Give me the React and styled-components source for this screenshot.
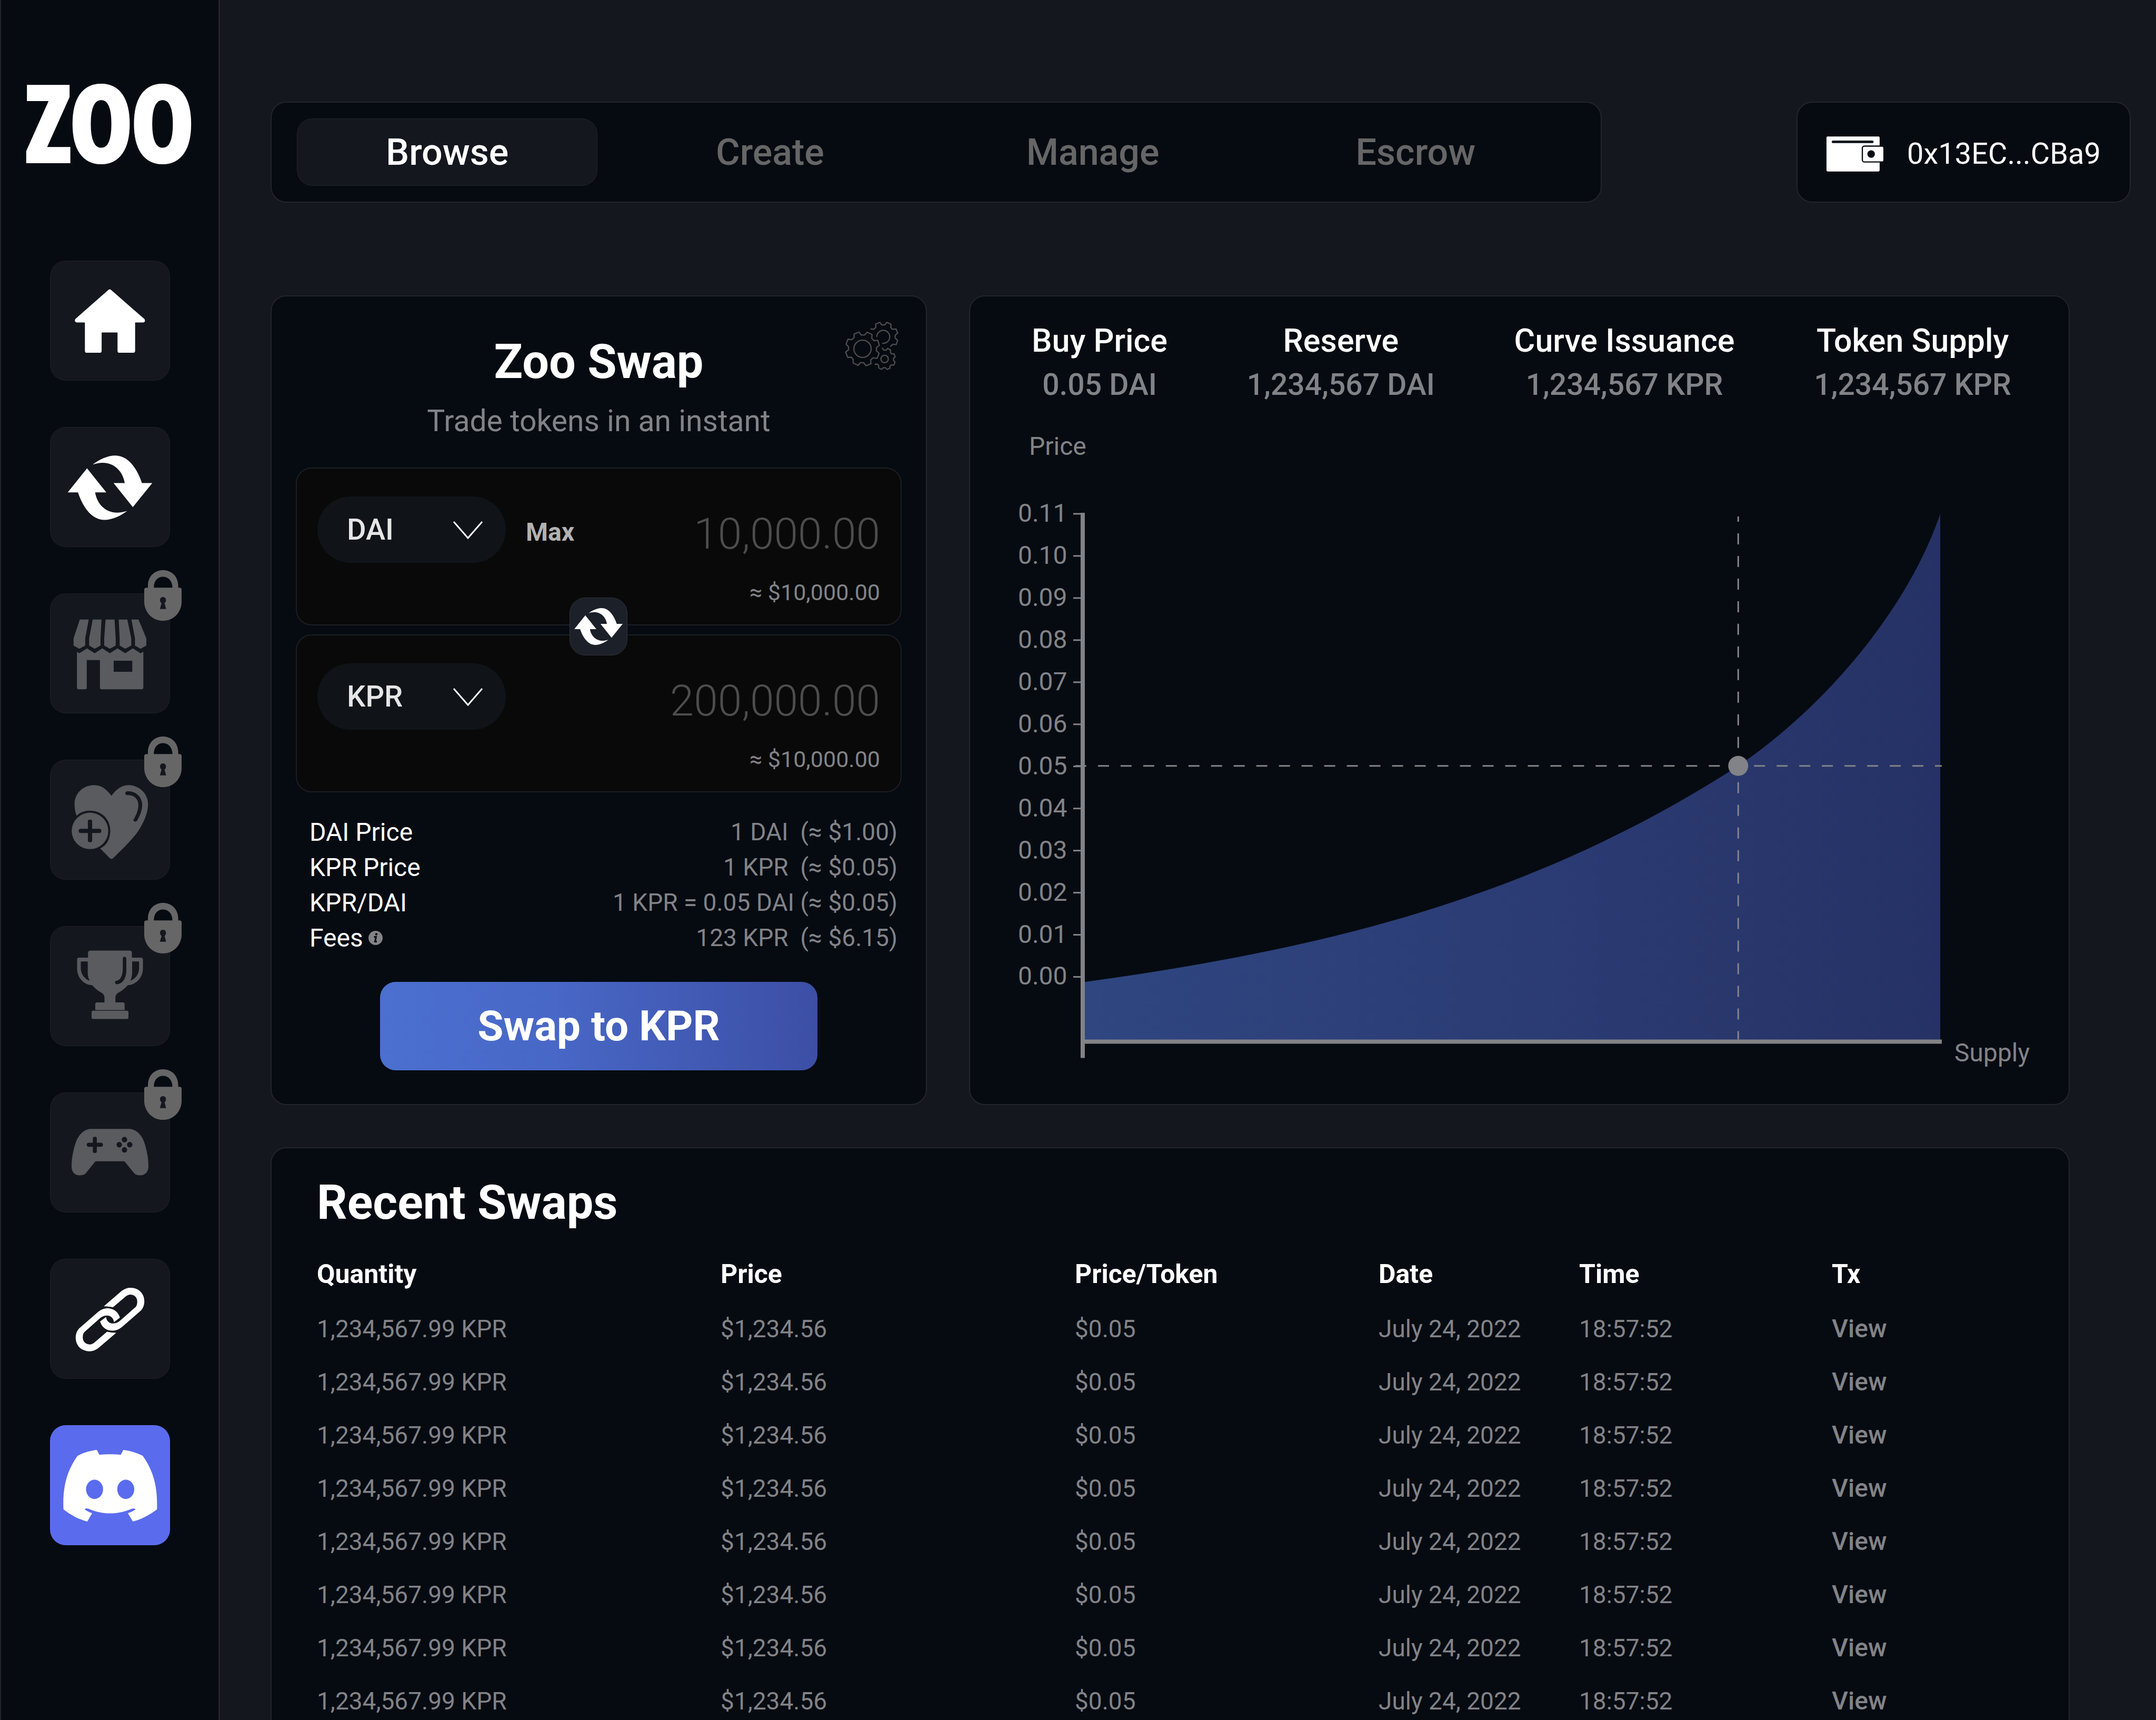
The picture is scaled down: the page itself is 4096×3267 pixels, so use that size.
import React from "react";
import styled, { createGlobalStyle } from "styled-components";

const c = {
  page: "#14171e",
  panel: "#060b12",
  well: "#090909",
  line: "#23252b",
  muted: "#828387",
  dim: "#666666",
  faint: "#4d4d4d",
  icon: "#595b5f",
  white: "#ffffff",
};

const GlobalStyle = createGlobalStyle`
  *, *::before, *::after { box-sizing: border-box; }
  body { margin: 0; background: ${c.page}; }
  body, button, input, select {
    font-family: Roboto, "Liberation Sans", sans-serif;
    color: ${c.white};
  }
`;

const Layout = styled.div`
  display: flex;
  height: 100vh;
  overflow: hidden;
  background: ${c.page};
`;

/* ---------- sidebar ---------- */

const Sidebar = styled.aside`
  flex: 0 0 418px;
  display: flex;
  flex-direction: column;
  align-items: center;
  background: ${c.panel};
  border: solid ${c.line};
  border-width: 0 3px 0 2px;
`;

const Logo = styled.a`
  flex-shrink: 0;
  height: 240px;
  margin: 110px 0 145px;
  font-family: "Noto Sans ExtraCondensed Black", "Noto Sans ExtraCondensed", "Noto Sans Condensed", "Open Sans Condensed", "Roboto Condensed", "Liberation Sans Narrow", sans-serif;
  font-size: 196px;
  font-weight: 900;
  line-height: 240px;
  color: ${c.white};
  -webkit-text-stroke: 8px ${c.white};
  text-decoration: none;
`;

const SideNav = styled.nav`
  display: flex;
  flex-direction: column;
  gap: 88px;
`;

const Tile = styled.a`
  position: relative;
  display: block;
  width: 228px;
  height: 228px;
  border-radius: 30px;
  background: ${(p) => p.$bg || c.page};
  color: ${(p) => (p.$locked ? c.icon : c.white)};
  box-shadow: inset 0 0 0 1px rgba(255, 255, 255, 0.04);
`;

const TileArt = styled.svg`
  display: block;
  width: 100%;
  height: 100%;
  fill: currentColor;
`;

const LockBadge = styled.svg`
  position: absolute;
  top: -44px;
  right: -22px;
  width: 71px;
  height: 96px;
  fill: ${c.dim};
`;

const art = {
  home: {
    box: "354 660 846 349",
    draw: (
      <path d="M763 746Q775 741 787 746L1020 830Q1030 838 1012 840H954V922Q954 928 940 928H844Q830 928 830 922V869H718V922Q718 928 704 928H614Q600 928 600 922V840H542Q524 838 532 830Z" />
    ),
  },
  swap: {
    box: "354 1145 846 349",
    draw: (
      <>
        <path d="M655 1254C700 1240 760 1228 815 1228C900 1228 965 1262 1002 1308H1075L938 1378L802 1308H881C868 1275 810 1249 725 1249C700 1249 680 1251 655 1254Z" />
        <path d="M898 1389C853 1403 793 1415 738 1415C653 1415 588 1381 551 1335H479L615 1265L751 1335H672C685 1368 743 1394 828 1394C853 1394 873 1392 898 1389Z" />
      </>
    ),
  },
  store: {
    box: "354 109 846 349",
    draw: (
      <>
        <path d="M564 185H627L602 240V261L561 270L520 261V240ZM655 185H717L710 240V261L669 270L630 261V240ZM746 185H809L817 240V261L776 270L736 261V240ZM838 185H899L927 240V261L884 270L845 261V240ZM928 185H978L1033 240V261L992 270L953 261V240Z" />
        <path
          fillRule="evenodd"
          d="M544 279L561 283L615 269L669 283L723 269L776 283L830 269L884 283L938 269L992 283L1012 279V383Q1012 388 1000 388H718Q706 388 706 383V303H613V383Q613 388 601 388H556Q544 388 544 383ZM803 305V337H934V305Z"
        />
      </>
    ),
  },
  heart: {
    box: "354 593 846 349",
    draw: (
      <>
        <path
          fillRule="evenodd"
          d="M787 698C815 682 855 667 906 667C985 667 1045 692 1045 722C1045 750 1010 780 970 804C920 832 850 858 800 879Q787 884 774 879L708 851C755 843 779 822 779 799C779 765 715 741 636 741C600 741 565 746 542 756C532 747 527 735 527 722C527 690 590 667 665 667C718 667 755 680 787 698ZM898 685C950 682 1004 700 1004 724C1004 742 985 758 968 770C960 775 940 773 942 768C960 755 977 742 977 724C977 708 945 694 898 696C880 695 880 686 898 685Z"
        />
        <ellipse cx="636" cy="800" rx="129" ry="53" />
        <rect x="621" y="767" width="30" height="66" rx="15" ry="5" fill={c.page} />
        <rect x="556" y="794" width="160" height="12" rx="14" ry="6" fill={c.page} />
      </>
    ),
  },
  trophy: {
    box: "354 1076 846 349",
    draw: (
      <>
        <path
          fillRule="evenodd"
          d="M622 1152Q624 1148 636 1147H917Q930 1148 931 1152V1168H997Q1008 1168 1009 1174V1200C1009 1226 960 1247 902 1248C880 1258 855 1266 835 1270C820 1274 815 1278 815 1286V1298H868Q879 1298 880 1303V1320H673V1303Q674 1298 685 1298H738V1286C738 1278 733 1274 718 1270C698 1266 673 1258 651 1248C593 1247 545 1226 545 1200V1174Q546 1168 557 1168H622ZM571 1179H620V1215Q621 1226 633 1235C595 1230 572 1214 571 1200ZM982 1179H933V1215Q932 1226 920 1235C958 1230 981 1214 982 1200ZM867 1170Q870 1165 880 1165Q892 1166 892 1171V1205C892 1230 860 1245 825 1245Q812 1244 812 1239Q814 1235 825 1235C850 1233 867 1220 867 1200Z"
        />
        <rect x="647" y="1322" width="260" height="24" rx="11" ry="4" />
      </>
    ),
  },
  game: {
    box: "354 90 846 349",
    draw: (
      <>
        <path d="M640 196H915C960 197 1005 213 1025 243C1040 265 1048 285 1048 305C1048 322 1020 331 990 331C975 331 962 330 952 327L880 291Q877 290 872 290H680Q676 290 673 291L602 327C592 330 578 331 563 331C530 331 506 322 506 305C506 285 515 262 532 240C552 214 592 197 640 196Z" />
        <g fill={c.page}>
          <rect x="656" y="219" width="28" height="47" rx="12" ry="5" />
          <rect x="613" y="236" width="114" height="12" rx="14" ry="6" />
          <ellipse cx="842" cy="242" rx="19" ry="8" />
          <ellipse cx="879" cy="227" rx="19" ry="8" />
          <ellipse cx="916" cy="242" rx="19" ry="8" />
          <ellipse cx="879" cy="257" rx="19" ry="8" />
        </g>
      </>
    ),
  },
  link: {
    box: "354 573 846 349",
    draw: (
      <>
        <path
          id="chain-half"
          d="M733 711L860 666C880 660 900 657 920 657C975 657 1019 672 1019 697C1019 710 1005 721 985 727L868 769C848 776 825 782 797 782C750 782 720 772 707 755L749 742C752 753 772 761 797 761C815 761 830 759 845 754L958 713C966 709 969 704 969 697C969 686 950 677 920 677C908 677 898 679 889 682L798 714C780 712 755 711 733 711Z"
        />
        <use href="#chain-half" transform="rotate(180 777 749.5)" />
      </>
    ),
  },
  discord: {
    box: "354 1055 846 349",
    draw: (
      <path
        fillRule="evenodd"
        d="M548 1144C590 1135 640 1129 684 1127L702 1141C750 1139 805 1139 853 1141L871 1127C915 1129 965 1135 1008 1144C1070 1180 1115 1225 1108 1300C1055 1316 1000 1329 938 1335L903 1311C925 1308 940 1305 957 1300C950 1296 940 1297 930 1298C835 1316 720 1316 625 1298C610 1296 603 1297 598 1300C615 1305 630 1308 651 1311L617 1335C555 1329 500 1316 449 1300C440 1225 486 1180 548 1144ZM608 1241.5A60 28 0 1 0 728 1241.5A60 28 0 1 0 608 1241.5ZM828 1241.5A60 28 0 1 0 948 1241.5A60 28 0 1 0 828 1241.5Z"
      />
    ),
  },
};

const sideItems = [
  { label: "Home", art: art.home },
  { label: "Swap", art: art.swap },
  { label: "Market", art: art.store, locked: true },
  { label: "Adopt", art: art.heart, locked: true },
  { label: "Rewards", art: art.trophy, locked: true },
  { label: "Games", art: art.game, locked: true },
  { label: "Links", art: art.link },
  { label: "Discord", art: art.discord, bg: "#5a6bee" },
];

const Art = ({ of }) => (
  <TileArt viewBox={of.box} preserveAspectRatio="none" aria-hidden="true">
    {of.draw}
  </TileArt>
);

const Lock = () => (
  <LockBadge viewBox="1015 49 263 147" preserveAspectRatio="none" aria-hidden="true">
    <path
      fillRule="evenodd"
      d="M1041 100V92C1045 65 1090 49 1147 49C1204 49 1250 65 1254 92V100H1266Q1278 101 1278 105V143C1276 170 1225 196 1147 196C1070 196 1018 170 1015 143V105Q1016 101 1028 100ZM1083 100H1213V95C1208 78 1182 68 1147 68C1112 68 1087 78 1083 95ZM1137 145C1120 140 1122 127 1147 127C1172 127 1174 140 1158 145L1169 162H1125Z"
    />
  </LockBadge>
);

/* ---------- header ---------- */

const Main = styled.main`
  flex: 1;
  min-width: 0;
  display: flex;
  flex-direction: column;
  padding-top: 193px;
`;

const Header = styled.header`
  flex-shrink: 0;
  display: flex;
  justify-content: space-between;
  gap: 80px;
  height: 192px;
  margin: 0 48px 176px 96px;
`;

const Tabs = styled.nav`
  flex: 1;
  max-width: 2529px;
  display: grid;
  grid-template-columns: repeat(4, 1fr);
  gap: 42px;
  align-items: center;
  padding: 0 66px 0 48px;
  background: ${c.panel};
  border: 2px solid ${c.line};
  border-radius: 30px;
`;

const Tab = styled.a`
  height: 128px;
  border-radius: 30px;
  background: ${(p) => (p.$active ? c.page : "transparent")};
  box-shadow: ${(p) => (p.$active ? "inset 0 0 0 1px rgba(255,255,255,.06)" : "none")};
  color: ${(p) => (p.$active ? c.white : c.dim)};
  font-size: 70px;
  font-weight: 500;
  line-height: 128px;
  text-align: center;
  text-decoration: none;
`;

const Wallet = styled.button`
  flex: 0 0 635px;
  display: flex;
  align-items: center;
  justify-content: space-between;
  padding: 6px 55px 0;
  background: ${c.panel};
  border: 2px solid ${c.line};
  border-radius: 30px;
  font-size: 56px;
  line-height: 72px;
`;

const WalletArt = styled.svg`
  width: 108px;
  height: 67px;
  fill: ${c.white};
`;

/* ---------- cards ---------- */

const Content = styled.div`
  flex: 1;
  display: flex;
  flex-direction: column;
  gap: 80px;
  margin: 0 164px 0 96px;
`;

const TopRow = styled.div`
  display: grid;
  grid-template-columns: 1247px minmax(0, 1fr);
  gap: 80px;
`;

const Card = styled.section`
  background: ${c.panel};
  border: 2px solid ${c.line};
  border-radius: 30px;
`;

const SwapCard = styled(Card)`
  position: relative;
  display: flex;
  flex-direction: column;
  padding: 75px 46px 64px;
`;

const Title = styled.h1`
  margin: 0;
  font-size: 90px;
  font-weight: 700;
  line-height: 100px;
  text-align: ${(p) => p.$align || "left"};
`;

const Subtitle = styled.p`
  margin: 26px 0 52px;
  color: ${c.muted};
  font-size: 57px;
  line-height: 72px;
  text-align: center;
`;

const SettingsButton = styled.button`
  position: absolute;
  top: 48px;
  right: 52px;
  width: 102px;
  height: 92px;
  padding: 0;
  border: 0;
  background: none;
  svg {
    display: block;
    width: 100%;
    height: 100%;
    fill: none;
    stroke: ${c.faint};
    stroke-width: 11;
    stroke-linecap: round;
    stroke-linejoin: round;
    overflow: visible;
  }
`;

const Pair = styled.div`
  position: relative;
  display: flex;
  flex-direction: column;
  gap: 17px;
`;

const Well = styled.div`
  display: flex;
  justify-content: space-between;
  height: 300px;
  padding: 53px 39px 0;
  background: ${c.well};
  border: 2px solid #1c1f23;
  border-radius: 30px;
`;

const TokenSide = styled.div`
  display: flex;
  align-items: center;
  gap: 38px;
  height: 126px;
`;

const Picker = styled.div`
  position: relative;
  width: 358px;
  height: 126px;
  svg {
    position: absolute;
    top: 47px;
    right: 43px;
    width: 58px;
    height: 34px;
    fill: none;
    stroke: ${c.white};
    stroke-width: 3;
    pointer-events: none;
  }
`;

const TokenSelect = styled.select`
  appearance: none;
  width: 100%;
  height: 100%;
  padding: 0 56px;
  border: 0;
  border-radius: 63px;
  background: #101419;
  color: #e6e6e6;
  font-size: 56px;
  font-weight: 500;
`;

const MaxButton = styled.button`
  padding: 10px 0 0;
  border: 0;
  background: none;
  color: #b2b2b2;
  font-size: 48px;
  font-weight: 700;
  line-height: 60px;
`;

const AmountSide = styled.div`
  display: flex;
  flex-direction: column;
  align-items: flex-end;
  gap: 36px;
  padding-top: 26px;
`;

const Amount = styled.input`
  width: 520px;
  height: 90px;
  padding: 0;
  border: 0;
  background: none;
  color: ${c.faint};
  font-size: 82px;
  font-weight: 300;
  text-align: right;
`;

const Approx = styled.span`
  color: ${c.muted};
  font-size: 43px;
  line-height: 60px;
`;

const FlipButton = styled.button`
  position: absolute;
  top: 247px;
  left: 50%;
  width: 110px;
  height: 110px;
  margin-left: -56px;
  padding: 0 8px;
  border: 1px solid #30333a;
  border-radius: 30px;
  background: #1c2029;
  color: ${c.white};
  svg {
    display: block;
    width: 92px;
    height: 70px;
    fill: currentColor;
  }
`;

const Details = styled.dl`
  margin: 42px 8px 50px 26px;
`;

const Detail = styled.div`
  display: flex;
  justify-content: space-between;
  line-height: 67px;
  dt {
    display: flex;
    align-items: center;
    gap: 10px;
    font-size: 48px;
  }
  dd {
    margin: 0;
    color: ${c.muted};
    font-size: 46px;
    white-space: pre;
  }
  svg {
    width: 27px;
    height: 27px;
  }
`;

const SwapButton = styled.button`
  align-self: center;
  width: 831px;
  height: 168px;
  border: 0;
  border-radius: 30px;
  background: linear-gradient(90deg, #4b70d0, #4867c6 40%, #3c4fa5);
  font-size: 80px;
  font-weight: 700;
`;

/* ---------- chart ---------- */

const ChartCard = styled(Card)`
  padding: 42px 0 0;
`;

const Stats = styled.dl`
  display: flex;
  justify-content: space-between;
  margin: 0 109px 0 117px;
`;

const Stat = styled.div`
  font-weight: 500;
  line-height: 84px;
  text-align: center;
  dt {
    font-size: 61px;
  }
  dd {
    margin: 0;
    color: ${c.muted};
    font-size: 57px;
  }
`;

const AxisTitle = styled.p`
  margin: 45px 0 62px 112px;
  color: ${c.muted};
  font-size: 48px;
  line-height: 60px;
`;

const Plot = styled.svg`
  display: block;
  width: calc(100% - 156px);
  margin-left: 91px;
  overflow: visible;
  text {
    fill: ${c.muted};
    font-size: 48px;
  }
`;

const prices = ["0.11", "0.10", "0.09", "0.08", "0.07", "0.06", "0.05", "0.04", "0.03", "0.02", "0.01", "0.00"];

const PriceChart = () => (
  <Plot viewBox="0 0 1932 1095" role="img" aria-label="Price by supply">
    <defs>
      <linearGradient id="area" x1="0" x2="1" y1="0" y2="0">
        <stop offset="0" stopColor="#2f4680" />
        <stop offset="0.45" stopColor="#2c3d76" />
        <stop offset="1" stopColor="#263265" />
      </linearGradient>
    </defs>
    <path d="M125 926C557 866 967 775 1369 515C1519 414 1687 230 1753 36V1037H125Z" fill="url(#area)" />
    <g stroke={c.muted} fill="none">
      <path d="M109 515H1756" strokeWidth="3" strokeDasharray="21 22" />
      <path d="M1369 41V1035" strokeWidth="3" strokeDasharray="21 22" strokeDashoffset="11" />
      <path d="M123 34V1070M119 1039H1756" strokeWidth="8" />
      {prices.map((p, i) => (
        <path key={p} d={`M105 ${36 + 80 * i}H123`} strokeWidth="3" />
      ))}
    </g>
    <circle cx="1369" cy="515" r="19" fill={c.muted} />
    {prices.map((p, i) => (
      <text key={p} x="0" y={51 + 80 * i}>
        {p}
      </text>
    ))}
    <text x="1780" y="1077">
      Supply
    </text>
  </Plot>
);

/* ---------- table ---------- */

const TableCard = styled(Card)`
  flex: 1;
  padding: 54px 0 0 86px;
  border-bottom: 0;
  border-radius: 30px 30px 0 0;
`;

const Table = styled.table`
  width: 100%;
  margin-top: 32px;
  border-collapse: collapse;
  table-layout: fixed;
  font-size: 46px;
  text-align: left;
  th {
    height: 106px;
    padding: 0;
    font-size: 50px;
    font-weight: 700;
  }
  td {
    height: 101px;
    padding: 0;
    color: ${c.muted};
  }
`;

const Col = styled.col`
  width: ${(p) => p.$w};
`;

const ViewLink = styled.a`
  color: ${c.muted};
  font-size: 48px;
  font-weight: 500;
  text-decoration: none;
`;

const swaps = Array.from({ length: 8 }, () => ["1,234,567.99 KPR", "$1,234.56", "$0.05", "July 24, 2022", "18:57:52"]);

const details = [
  ["DAI Price", "1 DAI  (≈ $1.00)"],
  ["KPR Price", "1 KPR  (≈ $0.05)"],
  ["KPR/DAI", "1 KPR = 0.05 DAI (≈ $0.05)"],
  ["Fees", "123 KPR  (≈ $6.15)"],
];

const stats = [
  ["Buy Price", "0.05 DAI"],
  ["Reserve", "1,234,567 DAI"],
  ["Curve Issuance", "1,234,567 KPR"],
  ["Token Supply", "1,234,567 KPR"],
];

const TokenPicker = ({ label, value }) => (
  <Picker>
    <TokenSelect aria-label={label} defaultValue={value}>
      <option>DAI</option>
      <option>KPR</option>
    </TokenSelect>
    <svg viewBox="0 0 58 34" aria-hidden="true">
      <path d="M2 1L29 32L56 1" />
    </svg>
  </Picker>
);

export default function App() {
  return (
    <Layout>
      <GlobalStyle />
      <Sidebar>
        <Logo href="#">ZOO</Logo>
        <SideNav aria-label="Sections">
          {sideItems.map((item) => (
            <Tile key={item.label} href="#" aria-label={item.label} $locked={item.locked} $bg={item.bg}>
              <Art of={item.art} />
              {item.locked && <Lock />}
            </Tile>
          ))}
        </SideNav>
      </Sidebar>
      <Main>
        <Header>
          <Tabs aria-label="Pages">
            <Tab href="#" $active>
              Browse
            </Tab>
            <Tab href="#">Create</Tab>
            <Tab href="#">Manage</Tab>
            <Tab href="#">Escrow</Tab>
          </Tabs>
          <Wallet type="button">
            <WalletArt viewBox="58 165 505 311" aria-hidden="true">
              <rect x="58" y="165" width="472" height="311" rx="10" />
              <rect x="105" y="201" width="371" height="23" rx="12" fill={c.panel} />
              <rect x="371" y="244" width="200" height="153" rx="24" fill={c.panel} />
              <rect x="382" y="256" width="181" height="130" rx="12" />
              <circle cx="454.5" cy="321" r="33.5" fill={c.panel} />
            </WalletArt>
            0x13EC...CBa9
          </Wallet>
        </Header>
        <Content>
          <TopRow>
            <SwapCard>
              <SettingsButton type="button" aria-label="Settings">
                <svg viewBox="57 63 475 432" aria-hidden="true">
                  <path d="M183 156L201 182H232L254 157L298 178L295 211L314 232L348 229L363 273L337 296V322L361 346L343 390L306 385L286 405L288 438L244 456L223 429H194L174 453L130 433L129 399L114 380L81 381L62 334L88 314V286L66 264L83 219L118 224L138 203V173Z" />
                  <circle cx="213" cy="305" r="77" />
                  <path d="M287 128L315 131L332 112L330 84L367 69L386 92H411L430 69L467 86L465 115L480 131L512 128L526 165L504 185V208L526 229L513 268L482 264L464 282" />
                  <path d="M340 195A58 58 0 1 1 393 256" />
                  <path d="M389 299L404 317H423L437 302L463 315L462 338L474 350L495 349L504 377L489 390V407L503 422L492 450L469 449L457 460L458 478L432 489L417 473H399L384 488L357 475V453L347 442H325" />
                  <circle cx="410" cy="396" r="33" />
                </svg>
              </SettingsButton>
              <Title $align="center">Zoo Swap</Title>
              <Subtitle>Trade tokens in an instant</Subtitle>
              <Pair>
                <Well>
                  <TokenSide>
                    <TokenPicker label="From token" value="DAI" />
                    <MaxButton type="button">Max</MaxButton>
                  </TokenSide>
                  <AmountSide>
                    <Amount aria-label="Amount to swap" defaultValue="10,000.00" />
                    <Approx>≈ $10,000.00</Approx>
                  </AmountSide>
                </Well>
                <Well>
                  <TokenSide>
                    <TokenPicker label="To token" value="KPR" />
                  </TokenSide>
                  <AmountSide>
                    <Amount aria-label="Amount received" defaultValue="200,000.00" />
                    <Approx>≈ $10,000.00</Approx>
                  </AmountSide>
                </Well>
                <FlipButton type="button" aria-label="Flip tokens">
                  <svg viewBox="479 1228 596 187" preserveAspectRatio="none" aria-hidden="true">
                    {art.swap.draw}
                  </svg>
                </FlipButton>
              </Pair>
              <Details>
                {details.map(([name, value]) => (
                  <Detail key={name}>
                    <dt>
                      {name}
                      {name === "Fees" && (
                        <svg viewBox="0 0 27 27" aria-hidden="true">
                          <circle cx="13.5" cy="13.5" r="13.5" fill={c.muted} />
                          <circle cx="15" cy="6.5" r="2.2" fill={c.panel} />
                          <path d="M10.5 11.5H14.5L12.5 20.5H16" fill="none" stroke={c.panel} strokeWidth="3" />
                        </svg>
                      )}
                    </dt>
                    <dd>{value}</dd>
                  </Detail>
                ))}
              </Details>
              <SwapButton type="button">Swap to KPR</SwapButton>
            </SwapCard>
            <ChartCard>
              <Stats>
                {stats.map(([name, value]) => (
                  <Stat key={name}>
                    <dt>{name}</dt>
                    <dd>{value}</dd>
                  </Stat>
                ))}
              </Stats>
              <AxisTitle>Price</AxisTitle>
              <PriceChart />
            </ChartCard>
          </TopRow>
          <TableCard>
            <Title as="h2">Recent Swaps</Title>
            <Table>
              <colgroup>
                <Col $w="767px" />
                <Col $w="673px" />
                <Col $w="577px" />
                <Col $w="381px" />
                <Col $w="480px" />
                <Col $w="auto" />
              </colgroup>
              <thead>
                <tr>
                  {["Quantity", "Price", "Price/Token", "Date", "Time", "Tx"].map((h) => (
                    <th key={h} scope="col">
                      {h}
                    </th>
                  ))}
                </tr>
              </thead>
              <tbody>
                {swaps.map((row, i) => (
                  <tr key={i}>
                    {row.map((cell) => (
                      <td key={cell}>{cell}</td>
                    ))}
                    <td>
                      <ViewLink href="#">View</ViewLink>
                    </td>
                  </tr>
                ))}
              </tbody>
            </Table>
          </TableCard>
        </Content>
      </Main>
    </Layout>
  );
}
